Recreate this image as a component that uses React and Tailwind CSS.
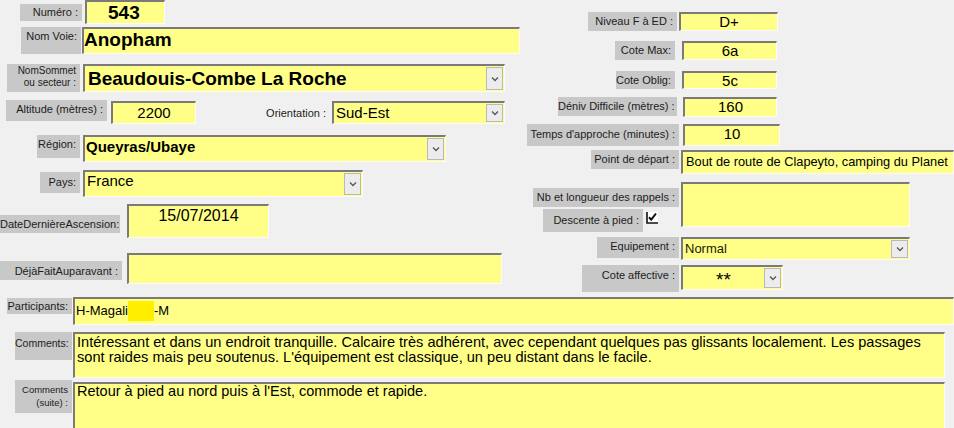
import React from "react";

// sunken yellow field, Access style
const field =
  "bg-[#ffff88] border-t-2 border-l-2 border-t-[#7a7a7a] border-l-[#7a7a7a] border-r border-b border-r-[#fbfbfb] border-b-[#fbfbfb] shrink-0 overflow-hidden text-black";
const label = "bg-[#c8c8c8] text-right text-[#1c1c1c] shrink-0 pr-[4px] whitespace-nowrap";

function Drop() {
  return (
    <div className="ml-auto mr-[1px] my-[1px] w-[17px] shrink-0 self-stretch bg-[#ececec] border border-[#b9b9b9] flex items-center justify-center">
      <svg width="8" height="6" viewBox="0 0 8 6">
        <path d="M1 1.5l3 3 3-3" stroke="#555" strokeWidth="1.3" fill="none" />
      </svg>
    </div>
  );
}

function Check() {
  return (
    <svg width="12" height="12" viewBox="0 0 12 12" className="shrink-0">
      <rect x="1" y="0" width="11" height="11" fill="#fff" />
      <path d="M1 0V11H12" stroke="#111" strokeWidth="1.6" fill="none" />
      <path d="M3 5.2l2.2 2.4L10 1.5" stroke="#111" strokeWidth="2" fill="none" />
    </svg>
  );
}

export default function App() {
  return (
    <div className="w-[954px] h-[428px] overflow-hidden bg-[#f0f0f0] font-['Liberation_Sans',Arial,sans-serif] text-[11px] leading-[13px]">
      {/* top part: two columns */}
      <div className="flex h-[297px]">
        {/* left column */}
        <div className="w-[520px] shrink-0 flex flex-col">
          <div className="flex items-start h-[24px]">
            <div className={`${label} ml-[20px] mt-[4px] w-[62px] h-[17px] pt-[2px]`}>Numéro :</div>
            <div className={`${field} ml-[3px] w-[80px] h-[24px] pl-[21px] font-bold text-[19px] leading-[22px]`}>543</div>
          </div>

          <div className="flex items-start mt-[3px]">
            <div className={`${label} ml-[21px] w-[60px] h-[27px] pt-[3px]`}>Nom Voie:</div>
            <div className={`${field} ml-[1px] w-[438px] h-[27px] font-bold text-[19px] leading-[19px] pt-[1px]`}>Anopham</div>
          </div>

          <div className="flex items-start mt-[10px]">
            <div className={`${label} ml-[7px] w-[73px] h-[28px] pt-[1px] text-[10px] leading-[12px]`}>
              NomSommet
              <br />
              ou secteur :
            </div>
            <div className={`${field} ml-[3px] w-[422px] h-[28px] flex`}>
              <span className="pl-[3px] pt-[3px] font-bold text-[19px] leading-[19px]">Beaudouis-Combe La Roche</span>
              <Drop />
            </div>
          </div>

          <div className="flex items-start mt-[8px]">
            <div className={`${label} ml-[6px] w-[101px] h-[21px] pt-[3px]`}>Altitude (mètres) :</div>
            <div className={`${field} ml-[4px] mt-[1px] w-[85px] h-[23px] text-center text-[15px] leading-[17px] pt-[1px]`}>2200</div>
            <div className="w-[136px] shrink-0 text-right pr-[6px] pt-[7px] text-[#1c1c1c]">Orientation :</div>
            <div className={`${field} mt-[1px] w-[173px] h-[23px] flex`}>
              <span className="pl-[2px] pt-[1px] text-[15px] leading-[17px]">Sud-Est</span>
              <Drop />
            </div>
          </div>

          <div className="flex items-start mt-[11px]">
            <div className={`${label} ml-[37px] w-[43px] h-[23px] pt-[3px]`}>Région:</div>
            <div className={`${field} ml-[3px] w-[363px] h-[27px] flex`}>
              <span className="pl-[1px] pt-[1px] font-bold text-[15px] leading-[17px]">Queyras/Ubaye</span>
              <Drop />
            </div>
          </div>

          <div className="flex items-start mt-[8px]">
            <div className={`${label} ml-[40px] mt-[2px] w-[40px] h-[21px] pt-[4px]`}>Pays:</div>
            <div className={`${field} ml-[3px] w-[280px] h-[27px] flex`}>
              <span className="pl-[2px] text-[15px] leading-[17px]">France</span>
              <Drop />
            </div>
          </div>

          <div className="flex items-start mt-[7px]">
            <div className={`${label} mt-[11px] w-[120px] h-[18px] pt-[3px] pr-[2px]`}>DateDernièreAscension:</div>
            <div className={`${field} ml-[7px] w-[142px] h-[34px] text-center text-[16px] leading-[18px] pt-[1px]`}>15/07/2014</div>
          </div>

          <div className="flex items-start mt-[15px]">
            <div className={`${label} mt-[8px] w-[122px] h-[19px] pt-[4px]`}>DéjàFaitAuparavant :</div>
            <div className={`${field} ml-[5px] w-[375px] h-[31px]`}></div>
          </div>
        </div>

        {/* right column */}
        <div className="flex-1 flex flex-col pt-[12px]">
          <div className="flex items-start">
            <div className={`${label} ml-[68px] w-[89px] h-[19px] pt-[3px]`}>Niveau F à ED :</div>
            <div className={`${field} ml-[2px] w-[99px] h-[19px] text-center text-[15px] leading-[15px]`}>D+</div>
          </div>

          <div className="flex items-start mt-[10px]">
            <div className={`${label} ml-[95px] w-[60px] h-[19px] pt-[3px]`}>Cote Max:</div>
            <div className={`${field} ml-[7px] w-[95px] h-[19px] text-center text-[15px] leading-[15px]`}>6a</div>
          </div>

          <div className="flex items-start mt-[11px]">
            <div className={`${label} ml-[96px] w-[59px] h-[18px] pt-[3px] pr-[3px]`}>Cote Oblig:</div>
            <div className={`${field} ml-[7px] w-[95px] h-[18px] text-center text-[15px] leading-[15px]`}>5c</div>
          </div>

          <div className="flex items-start mt-[8px]">
            <div className={`${label} ml-[38px] w-[119px] h-[19px] pt-[3px]`}>Déniv Difficile (mètres) :</div>
            <div className={`${field} ml-[6px] w-[94px] h-[20px] text-center text-[15px] leading-[16px]`}>160</div>
          </div>

          <div className="flex items-start mt-[7px]">
            <div className={`${label} ml-[7px] w-[152px] h-[22px] pt-[4px]`}>Temps d'approche (minutes) :</div>
            <div className={`${field} ml-[4px] w-[97px] h-[22px] text-center text-[15px] leading-[16px]`}>10</div>
          </div>

          <div className="flex items-start mt-[4px]">
            <div className={`${label} ml-[71px] w-[88px] h-[19px] pt-[3px]`}>Point de départ :</div>
            <div className={`${field} ml-[2px] w-[273px] h-[24px] pl-[3px] pt-[2px] text-[12.8px] leading-[16px] whitespace-nowrap`}>
              Bout de route de Clapeyto, camping du Planet
            </div>
          </div>

          <div className="flex items-start mt-[8px]">
            <div className="w-[161px] shrink-0 flex flex-col">
              <div className={`${label} ml-[13px] mt-[6px] w-[146px] h-[19px] pt-[3px]`}>Nb et longueur des rappels :</div>
              <div className="flex items-start ml-[23px] mt-[2px]">
                <div className={`${label} w-[100px] h-[23px] pt-[5px]`}>Descente à pied :</div>
                <div className="ml-[3px] mt-[3px]">
                  <Check />
                </div>
              </div>
            </div>
            <div className={`${field} w-[229px] h-[45px]`}></div>
          </div>

          <div className="flex items-start mt-[5px]">
            <div className={`${label} ml-[77px] w-[82px] h-[21px] pt-[3px]`}>Equipement :</div>
            <div className={`${field} ml-[2px] w-[229px] h-[23px] flex`}>
              <span className="pl-[2px] pt-[2px] text-[13px] leading-[16px] text-[#1a1a00]">Normal</span>
              <Drop />
            </div>
          </div>

          <div className="flex items-start mt-[5px]">
            <div className={`${label} ml-[62px] w-[97px] h-[27px] pt-[4px]`}>Cote affective :</div>
            <div className={`${field} ml-[2px] w-[102px] h-[25px] flex`}>
              <span className="flex-1 text-center pt-[3px] text-[19px] leading-[19px]">**</span>
              <Drop />
            </div>
          </div>
        </div>
      </div>

      {/* bottom part */}
      <div className="flex flex-col">
        <div className="flex items-start">
          <div className={`${label} ml-[7px] mt-[1px] w-[65px] h-[16px] pt-[2px] pr-[2px] text-[11px] leading-[12px]`}>Participants:</div>
          <div className={`${field} ml-[1px] flex-1 h-[28px] pl-[1px] pt-[4px] text-[13px] leading-[16px] whitespace-nowrap`}>
            H-Magali
            <span className="inline-block align-top -mt-[2px] w-[26px] h-[20px] bg-[#ffee00]"></span>
            -M
          </div>
        </div>

        <div className="flex items-start mt-[7px]">
          <div className={`${label} ml-[15px] w-[57px] h-[28px] pt-[5px] pr-[2px] text-[10.5px] leading-[12px]`}>Comments:</div>
          <div className={`${field} ml-[1px] w-[872px] h-[46px] pl-[2px] pt-[1px] text-[14.6px] leading-[15px] whitespace-nowrap`}>
            Intéressant et dans un endroit tranquille. Calcaire très adhérent, avec cependant quelques pas glissants localement. Les passages
            <br />
            sont raides mais peu soutenus. L'équipement est classique, un peu distant dans le facile.
          </div>
        </div>

        <div className="flex items-start mt-[2px]">
          <div className={`${label} ml-[15px] w-[57px] h-[33px] pt-[3px] pr-[3px] text-[9.5px] leading-[13px]`}>
            Comments
            <br />
            (suite) :
          </div>
          <div className={`${field} ml-[1px] mt-[2px] w-[872px] h-[50px] pl-[2px] text-[14.5px] leading-[15px]`}>
            Retour à pied au nord puis à l'Est, commode et rapide.
          </div>
        </div>
      </div>
    </div>
  );
}
